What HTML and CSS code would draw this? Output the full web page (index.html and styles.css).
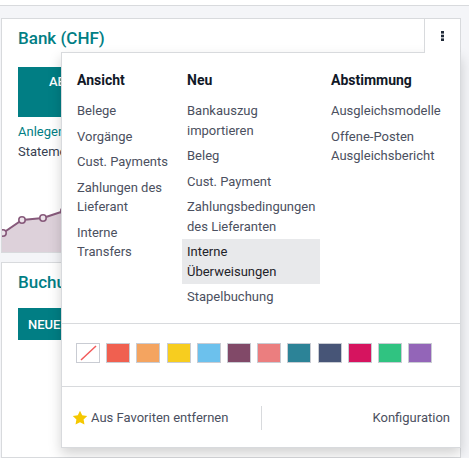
FILE: index.html
```html
<!DOCTYPE html>
<html lang="de">
<head>
<meta charset="utf-8">
<title>Dashboard</title>
<link rel="stylesheet" href="styles.css">
</head>
<body>
<div class="topbar"></div>
<div class="board">
  <div class="card card-bank">
    <div class="card-head">
      <div class="card-title">Bank (CHF)</div>
      <button class="kebab" type="button" aria-label="Optionen">
        <svg width="3" height="10" viewBox="0 0 3 10"><rect x="0" y="0" width="3" height="2.6"/><rect x="0" y="3.7" width="3" height="2.6"/><rect x="0" y="7.4" width="3" height="2.6"/></svg>
      </button>
    </div>
    <div class="card-body">
      <button class="btn btn-tall" type="button">ABGLEICHEN</button>
      <div class="lines">
        <a class="link">Anlegen</a>
        <div class="muted">Statement</div>
      </div>
    </div>
    <svg class="chart" width="458" height="91" viewBox="0 0 458 91">
      <path class="area" d="M0 73 L1 72 L20 59 L41 57 L62 50 L90 42 L120 37 L150 33 L180 30 L210 27 L240 25 L270 22 L300 20 L330 18 L360 15 L390 13 L420 11 L458 9 L458 91 L0 91 Z"/>
      <path class="line" d="M0 73 L1 72 L20 59 L41 57 L62 50 L90 42 L120 37 L150 33 L180 30 L210 27 L240 25 L270 22 L300 20 L330 18 L360 15 L390 13 L420 11 L458 9"/>
      <circle cx="1" cy="72" r="3.2"/>
      <circle cx="20" cy="59" r="3.2"/>
      <circle cx="41" cy="57" r="3.2"/>
      <circle cx="62" cy="50" r="3.2"/>
    </svg>

    <div class="dropdown">
      <div class="dd-cols">
        <div class="dd-col dd-col1">
          <div class="dd-head">Ansicht</div>
          <a class="dd-item">Belege</a>
          <a class="dd-item">Vorgänge</a>
          <a class="dd-item">Cust. Payments</a>
          <a class="dd-item">Zahlungen des Lieferant</a>
          <a class="dd-item">Interne Transfers</a>
        </div>
        <div class="dd-col">
          <div class="dd-head">Neu</div>
          <a class="dd-item">Bankauszug importieren</a>
          <a class="dd-item">Beleg</a>
          <a class="dd-item">Cust. Payment</a>
          <a class="dd-item">Zahlungsbedingungen des Lieferanten</a>
          <a class="dd-item dd-active">Interne Überweisungen</a>
          <a class="dd-item">Stapelbuchung</a>
        </div>
        <div class="dd-col dd-col3">
          <div class="dd-head">Abstimmung</div>
          <a class="dd-item">Ausgleichsmodelle</a>
          <a class="dd-item">Offene-Posten Ausgleichsbericht</a>
        </div>
      </div>
      <div class="dd-colors">
        <span class="swatch swatch-none"><svg width="22" height="18" viewBox="0 0 22 18"><line x1="4" y1="16" x2="19" y2="2"/></svg></span>
        <span class="swatch c1"></span>
        <span class="swatch c2"></span>
        <span class="swatch c3"></span>
        <span class="swatch c4"></span>
        <span class="swatch c5"></span>
        <span class="swatch c6"></span>
        <span class="swatch c7"></span>
        <span class="swatch c8"></span>
        <span class="swatch c9"></span>
        <span class="swatch c10"></span>
        <span class="swatch c11"></span>
      </div>
      <div class="dd-foot">
        <a class="fav">
          <svg class="star" width="16" height="16" viewBox="0 0 24 24"><path d="M12 1l3.3 6.8 7.5 1.1-5.4 5.3 1.3 7.5L12 18.2l-6.7 3.5 1.3-7.5L1.2 8.9l7.5-1.1z"/></svg>
          <span>Aus Favoriten entfernen</span>
        </a>
        <span class="sep"></span>
        <a class="config">Konfiguration</a>
      </div>
    </div>
  </div>

  <div class="card card-second">
    <div class="card-head">
      <div class="card-title">Buchungen</div>
    </div>
    <div class="card-body body-second">
      <button class="btn" type="button">NEUE BUCHUNG</button>
    </div>
  </div>
</div>
</body>
</html>
```

FILE: styles.css
```css
* { box-sizing: border-box; margin: 0; padding: 0; }

body {
  margin: 0;
  width: 469px;
  height: 458px;
  overflow: hidden;
  font-family: Roboto, "Noto Sans", sans-serif;
  background: #f4f5f8;
}

.topbar {
  height: 6px;
  background: #ffffff;
  border-bottom: 1px solid #d8dadd;
}

.board {
  display: flex;
  flex-direction: column;
  gap: 9px;
  padding: 12px 0 0 1px;
}

.card {
  width: 460px;
  background: #ffffff;
  border: 1px solid #d8dadd;
}

.card-bank {
  position: relative;
  z-index: 5;
}

.card-second {
  height: 196px;
}

.card-head {
  display: flex;
  justify-content: space-between;
  align-items: flex-start;
  height: 33px;
}

.card-title {
  padding: 7px 0 0 16px;
  font-size: 17px;
  font-weight: 500;
  line-height: 24px;
  color: #017e84;
}

.kebab {
  position: relative;
  z-index: 11;
  width: 36px;
  height: 34px;
  display: flex;
  justify-content: center;
  align-items: flex-start;
  padding-top: 12px;
  background: #ffffff;
  border: 0;
  border-left: 1px solid #d8dadd;
}

.kebab svg { fill: #1f2937; display: block; }

.card-body {
  padding: 15px 16px 0 16px;
}

.body-second {
  padding-top: 12px;
}

.btn {
  display: block;
  background: #017e84;
  color: #ffffff;
  border: 0;
  font-family: Roboto, "Noto Sans", sans-serif;
  font-size: 13px;
  font-weight: 500;
  height: 32px;
  padding: 0 10px;
  text-transform: uppercase;
  white-space: nowrap;
}

.btn-tall {
  height: 50px;
  padding: 5px 31px 0 31px;
  line-height: 19.5px;
  text-align: left;
  display: flex;
  align-items: flex-start;
  width: 150px;
}

.lines {
  margin-top: 5px;
  font-size: 13px;
  line-height: 19.5px;
}

.link { display: block; color: #017e84; }
.muted { color: #374151; }

.chart { display: block; }
.chart .area { fill: #ddd1da; }
.chart .line { fill: none; stroke: #875a7b; stroke-width: 2; }
.chart circle { fill: #ece4ea; stroke: #875a7b; stroke-width: 1.6; }

/* dropdown */
.dropdown {
  position: absolute;
  top: 33px;
  right: -1px;
  z-index: 10;
  width: 400px;
  background: #ffffff;
  border: 1px solid #d8dadd;
  box-shadow: 0 6px 12px rgba(0, 0, 0, 0.175);
}

.dd-cols {
  display: grid;
  grid-template-columns: 110px 138px 1fr;
  padding: 17px 0 13.5px 10px;
}

.dd-col1 .dd-item { padding-right: 14px; }
.dd-col3 { padding-left: 6px; }

.dd-head {
  padding: 0 5px;
  margin-bottom: 7px;
  font-size: 14px;
  font-weight: 700;
  line-height: 21px;
  color: #111827;
}

.dd-item {
  display: block;
  padding: 3px 5px;
  font-size: 13px;
  line-height: 19.5px;
  color: #4b5060;
}

.dd-active {
  background: #e8e9eb;
  color: #1f2329;
}

.dd-colors {
  display: flex;
  gap: 6.2px;
  padding: 19px 14px 23px 14px;
  border-top: 1px solid #d8dadd;
}

.swatch {
  display: block;
  width: 24px;
  height: 20px;
  border: 1px solid #c9ccd3;
}

.swatch-none { background: #ffffff; }
.swatch-none svg { display: block; }
.swatch-none line { stroke: #f25a5a; stroke-width: 1.5; }

.c1 { background: #f06050; }
.c2 { background: #f4a460; }
.c3 { background: #f7cd1f; }
.c4 { background: #6cc1ed; }
.c5 { background: #814968; }
.c6 { background: #eb7e7f; }
.c7 { background: #2c8397; }
.c8 { background: #475577; }
.c9 { background: #d6145f; }
.c10 { background: #30c381; }
.c11 { background: #9365b8; }

.dd-foot {
  display: grid;
  grid-template-columns: 199px 1px 1fr;
  align-items: center;
  height: 61px;
  padding-top: 2px;
  border-top: 1px solid #d8dadd;
  font-size: 13px;
  line-height: 19.5px;
  color: #4b5060;
}

.fav {
  display: flex;
  align-items: center;
  gap: 3px;
  padding-left: 10px;
}

.star { display: block; fill: #f5c800; }

.sep {
  display: block;
  width: 1px;
  height: 24px;
  background: #d8dadd;
}

.config {
  display: block;
  text-align: right;
  padding-right: 10px;
}
```
